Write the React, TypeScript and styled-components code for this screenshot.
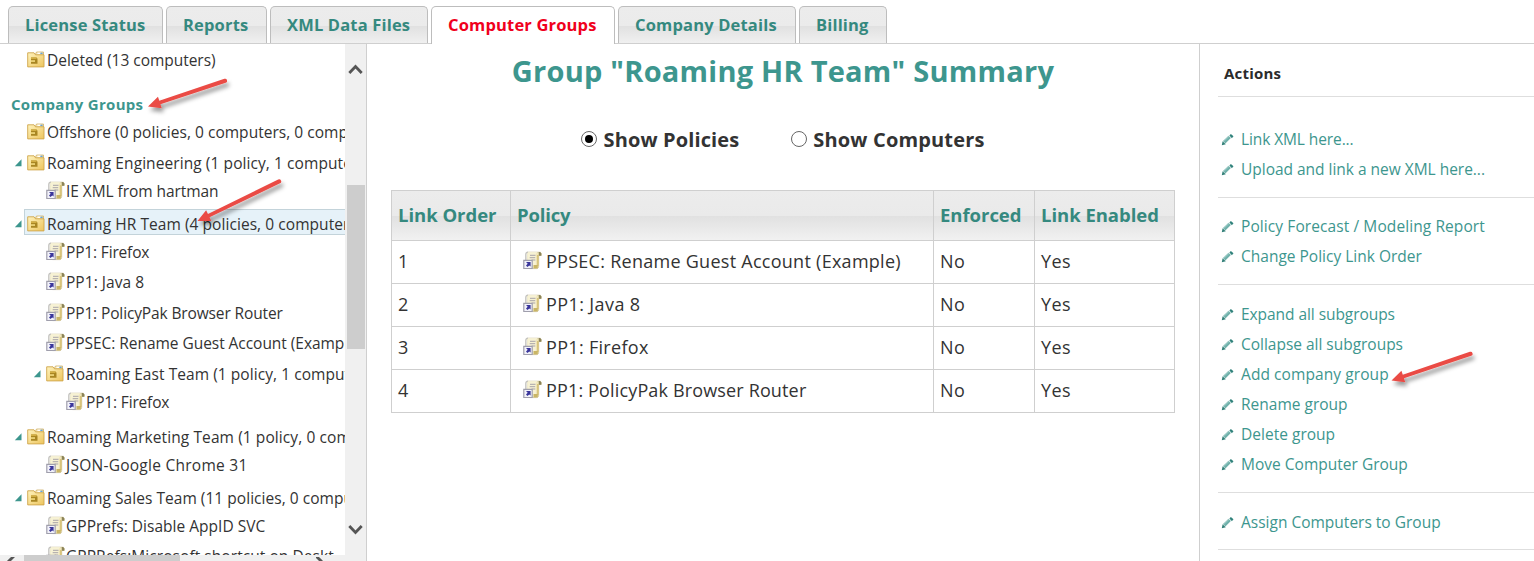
import React from "react";
import styled, { createGlobalStyle } from "styled-components";

const teal = "#3d968e";
const line = "#cfcfcf";

const GlobalStyle = createGlobalStyle`
  * { box-sizing: border-box; }
  body { margin: 0; background: #fff; overflow: hidden; }
`;

const Page = styled.div`
  position: relative;
  display: flex;
  flex-direction: column;
  width: 1534px;
  height: 561px;
  overflow: hidden;
  font-family: "Open Sans", "Noto Sans", sans-serif;
  color: #333;
`;

const TabBar = styled.nav`
  display: flex;
  flex: none;
  align-items: flex-end;
  gap: 3px;
  height: 44px;
  padding-left: 8px;
  border-bottom: 1px solid ${line};
`;

const Tab = styled.a<{ $width: number; $active?: boolean }>`
  width: ${(p) => p.$width}px;
  height: ${(p) => (p.$active ? 38 : 37)}px;
  padding-left: 16px;
  border: 1px solid #bdbdbd;
  border-bottom: 0;
  border-radius: 5px 5px 0 0;
  margin-bottom: ${(p) => (p.$active ? "-1px" : "0")};
  background: ${(p) =>
    p.$active ? "#fff" : "linear-gradient(#ececec 0%, #ebebeb 52%, #e1e1e1 54%, #f0f0f0 100%)"};
  color: ${(p) => (p.$active ? "#f0001c" : "#35897f")};
  font-size: 16.5px;
  font-weight: 700;
  line-height: 36px;
  letter-spacing: 0.17px;
  white-space: nowrap;
`;

const Columns = styled.div`
  display: flex;
  flex: 1;
  min-height: 0;
`;

const Sidebar = styled.aside`
  display: flex;
  width: 367px;
  border-right: 1px solid ${line};
`;

const TreePane = styled.div`
  display: flex;
  flex-direction: column;
  width: 345px;
`;

const Tree = styled.div`
  flex: 1;
  min-height: 0;
  padding-top: 3px;
  overflow: hidden;
`;

const levelIndent = [14, 33, 53];

const Row = styled.div<{ $level: number; $gap: number }>`
  display: flex;
  align-items: center;
  height: 24px;
  margin-top: ${(p) => p.$gap}px;
  padding-left: ${(p) => levelIndent[p.$level]}px;
`;

const Toggle = styled.span`
  display: flex;
  width: 10px;
  flex: none;
  padding-top: 2px;
`;

const Node = styled.span<{ $selected?: boolean }>`
  display: flex;
  flex: 1;
  align-items: center;
  height: 26px;
  padding-left: 2px;
  border: 1px solid ${(p) => (p.$selected ? "#c3d3da" : "transparent")};
  border-right: 0;
  background: ${(p) => (p.$selected ? "#e6f2f9" : "transparent")};
  ${(p) => p.$selected && "margin-top: -3px; padding-top: 3px;"}
`;

const Label = styled.span<{ $track: number }>`
  padding: 2px 0 0 1px;
  font-size: 15.5px;
  line-height: 22px;
  letter-spacing: ${(p) => p.$track}px;
  white-space: nowrap;
`;

const SectionTitle = styled.div`
  height: 24px;
  margin-top: 20px;
  padding-left: 11px;
  color: ${teal};
  font-size: 15px;
  font-weight: 700;
  line-height: 27px;
  letter-spacing: 0.3px;
`;

const HScroll = styled.div`
  display: flex;
  flex: none;
  height: 6px;
  background: #f0f0f0;
`;
const HArrow = styled.span<{ $width: number }>`
  display: flex;
  width: ${(p) => p.$width}px;
  height: 6px;
  align-items: flex-end;
  padding-left: 4px;
`;
const HTrack = styled.div`
  flex: 1;
`;
const HThumb = styled.div`
  width: 156px;
  height: 6px;
  background: #cdcdcd;
`;

const VScroll = styled.div`
  display: flex;
  flex-direction: column;
  align-items: center;
  width: 21px;
  padding: 19px 0 25px;
  background: #f0f0f0;
`;
const VTrack = styled.div`
  flex: 1;
  width: 18px;
  margin-left: 1px;
`;
const VThumb = styled.div`
  height: 164px;
  margin-top: 110px;
  background: #cdcdcd;
`;

const Main = styled.main`
  display: flex;
  flex-direction: column;
  align-items: center;
  width: 832px;
`;

const Title = styled.h1`
  margin: 6px 0 0;
  color: ${teal};
  font-size: 29px;
  font-weight: 700;
  line-height: 42px;
  letter-spacing: 0.24px;
  white-space: nowrap;
`;

const Options = styled.div`
  display: flex;
  margin-top: 33px;
  gap: 52px;
`;

const Option = styled.label<{ $track: number }>`
  display: flex;
  align-items: center;
  gap: 6px;
  font-size: 20px;
  font-weight: 700;
  line-height: 30px;
  letter-spacing: ${(p) => p.$track}px;
  white-space: nowrap;
`;

const Radio = styled.span<{ $checked?: boolean }>`
  display: flex;
  align-items: center;
  justify-content: center;
  width: 16px;
  height: 16px;
  margin-top: -2px;
  border: 1px solid #666;
  border-radius: 50%;
  background: #fff;
  &::after {
    content: "";
    width: 8px;
    height: 8px;
    border-radius: 50%;
    background: ${(p) => (p.$checked ? "#000" : "transparent")};
  }
`;

const Table = styled.div`
  width: 784px;
  margin-top: 35px;
  border: 1px solid ${line};
  border-width: 1px 0 0 1px;
`;

const TableRow = styled.div`
  display: grid;
  grid-template-columns: 119px 423px 101px 140px;
`;

const HeadCell = styled.div<{ $track: number }>`
  height: 50px;
  padding-left: 6px;
  border: 1px solid ${line};
  border-width: 0 1px 1px 0;
  background: linear-gradient(#ececec 0%, #eaeaea 50%, #e1e1e1 52%, #f1f1f1 100%);
  color: #35897f;
  font-size: 18.5px;
  font-weight: 700;
  line-height: 47px;
  letter-spacing: ${(p) => p.$track}px;
  white-space: nowrap;
`;

const Cell = styled.div<{ $track: number; $indent: number }>`
  display: flex;
  align-items: center;
  gap: 4px;
  height: 43px;
  padding: 0 0 3px ${(p) => p.$indent}px;
  border: 1px solid ${line};
  border-width: 0 1px 1px 0;
  font-size: 18px;
  line-height: 24px;
  letter-spacing: ${(p) => p.$track}px;
  white-space: nowrap;
`;

const Actions = styled.aside`
  flex: 1;
  padding: 15px 0 0 18px;
  border-left: 1px solid ${line};
`;

const ActionsTitle = styled.h2`
  margin: 0;
  padding-left: 6px;
  font-size: 15px;
  font-weight: 700;
  line-height: 29px;
  letter-spacing: 0.2px;
  color: #2b2b2b;
`;

const Divider = styled.hr<{ $before: number; $after: number }>`
  height: 1px;
  margin: ${(p) => p.$before}px 0 ${(p) => p.$after}px;
  border: 0;
  background: #dedede;
`;

const Action = styled.a<{ $track: number }>`
  display: flex;
  align-items: center;
  gap: 7px;
  height: 30px;
  padding-left: 3px;
  color: ${teal};
  font-size: 15.5px;
  letter-spacing: ${(p) => p.$track}px;
  white-space: nowrap;
`;

const Callouts = styled.svg`
  position: absolute;
  top: 0;
  left: 0;
  pointer-events: none;
`;

const Icon = styled.svg`
  flex: none;
`;

const Folder = () => (
  <Icon width="19" height="17" viewBox="0 0 19 17">
    <defs>
      <linearGradient id="fold" x1="0" y1="0" x2="1" y2="1">
        <stop offset="0" stopColor="#fff3bd" />
        <stop offset="1" stopColor="#edc55e" />
      </linearGradient>
    </defs>
    <path d="M8 4 9.5 1h7V5H8z" fill="#f5e6b4" stroke="#cfb06a" strokeWidth=".8" />
    <path d="M10.5 2.4h3.5" stroke="#fff" strokeWidth="1.6" />
    <path d="M13.3 2.4h2.3" stroke="#68a5d8" strokeWidth="1.4" />
    <path d="M.7 1.8H7l1.5 2H17v12.1H.7z" fill="url(#fold)" stroke="#cfa54b" strokeWidth=".9" />
    <path d="M4 6.5h5.5l1 1.2v5H4z" fill="#a98622" />
    <path d="M4 6.5h5.5V8H4z" fill="#d2ae43" />
    <path d="M4 9.2h4v1.7H4z" fill="#f0d77c" />
  </Icon>
);

const Scroll = () => (
  <Icon width="19" height="19" viewBox="0 0 19 19">
    <path d="M4.5 1.2h12c1.6 0 2.1 1 1.8 3.3h-2.6v10.8c0 1.5-1 2.3-2.2 2.3H6.5L4.2 9.5z" fill="#f1e7bb" stroke="#c5ba91" strokeWidth=".7" />
    <path d="M4 .9h10.6L12.8 3v14H4.3z" fill="#f8f3d8" opacity=".85" />
    <path d="M2.8 9.5V3.4C2.8 1.8 3.6 1.2 5 1.2" fill="none" stroke="#c4c3bf" strokeWidth="1.3" />
    <path d="M15.7 1.2c2-.5 3 .7 2.5 3.5h-2.4z" fill="#8b8358" />
    <path d="M14.8 4v11" stroke="#d8c47c" strokeWidth="1.8" />
    <path d="M7 4.3h5.5M6.7 6.7h5.5M8.5 9h3.8" stroke="#a8a3a8" />
    <path d="M10.5 14h4.3v3.4h-4.3z" fill="#c9b566" />
    <path d="M.8 9.3h8.4v8.2H.8z" fill="#f2f2fa" stroke="#a09fac" strokeWidth="1.2" />
    <path d="M3 11h4.6v4.6L6.3 14.4 4.4 16 3 14.6l1.7-1.9z" fill="#3a369b" />
  </Icon>
);

const Triangle = () => (
  <Icon width="8" height="8" viewBox="0 0 8 8">
    <path d="M7.5.3v7H.8z" fill={teal} />
  </Icon>
);

const Pencil = () => (
  <Icon width="13" height="13" viewBox="0 0 13 13">
    <path d="M3.2 9.2 8.7 3.9" stroke="#6fb0aa" strokeWidth="3.4" />
    <path d="M3.2 8 8 3.4" stroke="#a3cfca" strokeWidth="1" />
    <path d="M.8 12.2 1.6 8.2 4.8 11.2z" fill="#2f7e76" />
    <path d="m8.4 2.5 1.5-1.5 2.6 2.3-1.6 2z" fill="#30827b" />
  </Icon>
);

const Chevron = ({ d, w = 15, h = 12 }: { d: string; w?: number; h?: number }) => (
  <Icon width={w} height={h} viewBox={`0 0 ${w} ${h}`}>
    <path d={d} fill="none" stroke="#555" strokeWidth="2.8" />
  </Icon>
);

const Arrow = ({ x1, y1, x2, y2 }: { x1: number; y1: number; x2: number; y2: number }) => {
  const length = Math.hypot(x1 - x2, y1 - y2);
  const angle = (Math.atan2(y1 - y2, x1 - x2) * 180) / Math.PI;
  return (
    <g filter="url(#calloutShadow)">
      <path
        transform={`translate(${x2} ${y2}) rotate(${angle})`}
        d={`M0 0 12.5-6V-1.8L${length - 1}-2.1a2 2 0 0 1 0 4.2L12.5 1.8V6z`}
        fill="#ea4b45"
      />
    </g>
  );
};

const tabs: [string, number, boolean?][] = [
  ["License Status", 155],
  ["Reports", 101],
  ["XML Data Files", 158],
  ["Computer Groups", 184, true],
  ["Company Details", 178],
  ["Billing", 88],
];

type TreeItem = { text: string; kind: "group" | "policy"; level: number; gap: number; track: number; open?: boolean; selected?: boolean };

const groups: TreeItem[] = [
  { text: "Offshore (0 policies, 0 computers, 0 computers)", kind: "group", level: 0, gap: 4, track: 0.03 },
  { text: "Roaming Engineering (1 policy, 1 computer)", kind: "group", level: 0, gap: 7, track: 0.08, open: true },
  { text: "IE XML from hartman", kind: "policy", level: 1, gap: 4, track: -0.06 },
  { text: "Roaming HR Team (4 policies, 0 computers)", kind: "group", level: 0, gap: 9, track: 0.06, open: true, selected: true },
  { text: "PP1: Firefox", kind: "policy", level: 1, gap: 4, track: -0.16 },
  { text: "PP1: Java 8", kind: "policy", level: 1, gap: 6, track: 0.05 },
  { text: "PP1: PolicyPak Browser Router", kind: "policy", level: 1, gap: 7, track: -0.13 },
  { text: "PPSEC: Rename Guest Account (Example)", kind: "policy", level: 1, gap: 6, track: -0.045 },
  { text: "Roaming East Team (1 policy, 1 computer)", kind: "group", level: 1, gap: 7, track: 0.06, open: true },
  { text: "PP1: Firefox", kind: "policy", level: 2, gap: 4, track: -0.16 },
  { text: "Roaming Marketing Team (1 policy, 0 computers)", kind: "group", level: 0, gap: 11, track: 0.09, open: true },
  { text: "JSON-Google Chrome 31", kind: "policy", level: 1, gap: 4, track: 0.26 },
  { text: "Roaming Sales Team (11 policies, 0 computers)", kind: "group", level: 0, gap: 9, track: 0.04, open: true },
  { text: "GPPrefs: Disable AppID SVC", kind: "policy", level: 1, gap: 4, track: 0.02 },
  { text: "GPPRefs:Microsoft shortcut on Deskt", kind: "policy", level: 1, gap: 6, track: 0.06 },
];

const policies: [string, number][] = [
  ["PPSEC: Rename Guest Account (Example)", 0.27],
  ["PP1: Java 8", 0.4],
  ["PP1: Firefox", 0.31],
  ["PP1: PolicyPak Browser Router", 0.15],
];

const actionGroups: { before: number; after: number; items: [string, number][] }[] = [
  { before: 8, after: 27, items: [["Link XML here...", -0.1], ["Upload and link a new XML here...", -0.02]] },
  { before: 13, after: 13, items: [["Policy Forecast / Modeling Report", 0.09], ["Change Policy Link Order", 0] ] },
  {
    before: 13,
    after: 14,
    items: [
      ["Expand all subgroups", -0.06],
      ["Collapse all subgroups", -0.02],
      ["Add company group", 0.08],
      ["Rename group", 0],
      ["Delete group", 0.02],
      ["Move Computer Group", 0.01],
    ],
  },
  { before: 13, after: 14, items: [["Assign Computers to Group", 0]] },
];

const TreeRow = ({ item }: { item: TreeItem }) => (
  <Row $level={item.level} $gap={item.gap}>
    <Toggle>{item.open && <Triangle />}</Toggle>
    <Node $selected={item.selected}>
      {item.kind === "group" ? <Folder /> : <Scroll />}
      <Label $track={item.track}>{item.text}</Label>
    </Node>
  </Row>
);

export default function App() {
  return (
    <Page>
      <GlobalStyle />
      <TabBar>
        {tabs.map(([name, width, active]) => (
          <Tab key={name} $width={width} $active={active}>{name}</Tab>
        ))}
      </TabBar>
      <Columns>
        <Sidebar>
          <TreePane>
            <Tree>
              <TreeRow item={{ text: "Deleted (13 computers)", kind: "group", level: 0, gap: 0, track: -0.03 }} />
              <SectionTitle>Company Groups</SectionTitle>
              {groups.map((item, i) => <TreeRow key={i} item={item} />)}
            </Tree>
            <HScroll>
              <HArrow $width={24}><Chevron w={12} h={4} d="M10-1 5 4l3 4" /></HArrow>
              <HTrack><HThumb /></HTrack>
              <HArrow $width={33}><Chevron w={12} h={4} d="M0-1 5 4 2 8" /></HArrow>
            </HScroll>
          </TreePane>
          <VScroll>
            <Chevron d="M1.3 10 7.5 3.5 13.7 10" />
            <VTrack><VThumb /></VTrack>
            <Chevron d="M1.3 2 7.5 8.5 13.7 2" />
          </VScroll>
        </Sidebar>
        <Main>
          <Title>Group "Roaming HR Team" Summary</Title>
          <Options>
            <Option $track={0.13}><Radio $checked />Show Policies</Option>
            <Option $track={0.16}><Radio />Show Computers</Option>
          </Options>
          <Table>
            <TableRow>
              <HeadCell $track={-0.03}>Link Order</HeadCell>
              <HeadCell $track={-0.15}>Policy</HeadCell>
              <HeadCell $track={-0.03}>Enforced</HeadCell>
              <HeadCell $track={-0.03}>Link Enabled</HeadCell>
            </TableRow>
            {policies.map(([name, track], i) => (
              <TableRow key={name}>
                <Cell $track={0} $indent={6}>{i + 1}</Cell>
                <Cell $track={track} $indent={12}><Scroll />{name}</Cell>
                <Cell $track={0.4} $indent={6}>No</Cell>
                <Cell $track={0.4} $indent={6}>Yes</Cell>
              </TableRow>
            ))}
          </Table>
        </Main>
        <Actions>
          <ActionsTitle>Actions</ActionsTitle>
          {actionGroups.map((group, i) => (
            <React.Fragment key={i}>
              <Divider $before={group.before} $after={group.after} />
              {group.items.map(([name, track]) => (
                <Action key={name} $track={track}><Pencil />{name}</Action>
              ))}
            </React.Fragment>
          ))}
          <Divider $before={12} $after={0} />
        </Actions>
      </Columns>
      <Callouts width="1534" height="561">
        <defs>
          <filter id="calloutShadow" x="-20%" y="-30%" width="140%" height="180%">
            <feDropShadow dx="2" dy="4" stdDeviation="2" floodColor="#000" floodOpacity=".4" />
          </filter>
        </defs>
        <Arrow x1={226} y1={80.5} x2={148} y2={106.5} />
        <Arrow x1={280} y1={181} x2={197.5} y2={221} />
        <Arrow x1={1471.5} y1={353.5} x2={1391.5} y2={380.5} />
      </Callouts>
    </Page>
  );
}
